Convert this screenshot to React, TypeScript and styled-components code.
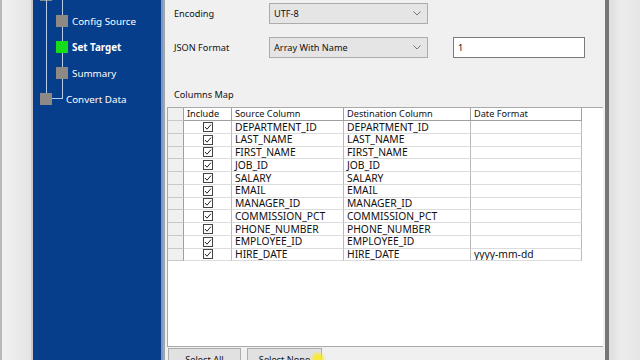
import styled, { createGlobalStyle } from "styled-components";

const GlobalStyle = createGlobalStyle`
  html, body {
    margin: 0;
    padding: 0;
    width: 640px;
    height: 360px;
    overflow: hidden;
    background: #e8e8e8;
  }
  * {
    box-sizing: border-box;
  }
`;

const font = `"Noto Sans", "Liberation Sans", sans-serif`;

const Screen = styled.div`
  display: flex;
  width: 640px;
  height: 360px;
  overflow: hidden;
  font-family: ${font};
  font-size: 9.2px;
  color: #111;
  position: relative;
`;

const DesktopLeft = styled.div`
  width: 33px;
  flex: none;
  border-left: 2px solid #b8b8b8;
  border-right: 2px solid #c9c9c9;
  background: linear-gradient(to right, #f1f1f1, #e4e4e4);
`;

const Sidebar = styled.div`
  position: relative;
  width: 128px;
  flex: none;
  background: #063e8b;
  padding-top: 8px;
`;

const TreeLines = styled.svg`
  position: absolute;
  left: 0;
  top: 0;
`;

const TreeItem = styled.div<{ $child?: boolean }>`
  position: relative;
  display: flex;
  align-items: center;
  height: 26px;
  padding-left: ${(p) => (p.$child ? 23 : 7)}px;
  gap: ${(p) => (p.$child ? 4 : 14)}px;
  color: #fff;
  font-size: 9.8px;
`;

const StepBox = styled.span<{ $active?: boolean }>`
  width: 12px;
  height: 12px;
  flex: none;
  background: ${(p) => (p.$active ? "#16dd1a" : "#8d8984")};
`;

const StepLabel = styled.span<{ $active?: boolean }>`
  font-weight: ${(p) => (p.$active ? 700 : 400)};
  white-space: nowrap;
`;

const Divider = styled.div`
  width: 4px;
  flex: none;
  border-left: 2px solid #7d98c2;
  background: #a4a4a4;
`;

const Panel = styled.div`
  width: 440px;
  flex: none;
  background: #f0f0f0;
  display: flex;
  flex-direction: column;
  padding-left: 2px;
  & > * {
    flex: none;
  }
`;

const FormRow = styled.div<{ $top: number }>`
  display: flex;
  align-items: center;
  height: 21px;
  margin-top: ${(p) => p.$top}px;
`;

const FieldLabel = styled.div`
  width: 102px;
  padding-left: 7px;
  flex: none;
`;

const Select = styled.div`
  width: 159px;
  height: 100%;
  display: flex;
  align-items: center;
  justify-content: space-between;
  padding: 0 6px 0 4px;
  background: #e5e5e5;
  border: 1px solid #acacac;
`;

const TextInput = styled.div`
  width: 132px;
  height: 100%;
  margin-left: 25px;
  display: flex;
  align-items: center;
  padding-left: 4px;
  background: #fff;
  border: 1px solid #7a7a7a;
`;

const SectionLabel = styled.div`
  margin-top: 30px;
  height: 14px;
  line-height: 14px;
  padding-left: 7px;
`;

const Grid = styled.div`
  margin-top: 5px;
  width: 436px;
  height: 240px;
  background: #fff;
  border: 1px solid #a9a9a9;
  border-right: none;
`;

const GridRow = styled.div<{ $header?: boolean }>`
  display: flex;
  height: ${(p) => (p.$header ? 13 : 12.75)}px;
`;

const Cell = styled.div<{ $w: number; $center?: boolean; $header?: boolean }>`
  width: ${(p) => p.$w}px;
  flex: none;
  display: flex;
  align-items: center;
  justify-content: ${(p) => (p.$center ? "center" : "flex-start")};
  padding-left: ${(p) => (p.$center ? 0 : 3)}px;
  border-right: 1px solid ${(p) => (p.$header ? "#a0a0a0" : "#b9b9b9")};
  border-bottom: 1px solid ${(p) => (p.$header ? "#a0a0a0" : "#dcdcdc")};
  font-size: ${(p) => (p.$header ? 9.2 : 10.3)}px;
  white-space: nowrap;
  overflow: hidden;
  line-height: 1;
`;

const RowHead = styled.div`
  width: 16px;
  flex: none;
  background: #f0f0f0;
  border-right: 1px solid #a0a0a0;
  border-bottom: 1px solid #c8c8c8;
`;

const ButtonBar = styled.div`
  display: flex;
  gap: 6px;
  margin-top: 1px;
  padding-left: 1px;
`;

const Button = styled.div<{ $w: number }>`
  width: ${(p) => p.$w}px;
  height: 23px;
  display: flex;
  justify-content: center;
  padding-top: 4px;
  background: #e1e1e1;
  border: 1px solid #adadad;
`;

const DesktopRight = styled.div`
  flex: 1;
  border-left: 4px solid #767676;
  background: linear-gradient(to right, #dedede, #ececec 40%, #e6e6e6);
`;

const CursorGlow = styled.div`
  position: absolute;
  left: 310px;
  top: 351px;
  width: 16px;
  height: 16px;
  border-radius: 50%;
  background: radial-gradient(circle, rgba(250, 235, 30, 0.85) 30%, rgba(250, 235, 30, 0) 72%);
  pointer-events: none;
`;

const Chevron = () => (
  <svg width="8" height="5" viewBox="0 0 8 5">
    <path d="M0.5 0.5 L4 4 L7.5 0.5" fill="none" stroke="#777" strokeWidth="1" />
  </svg>
);

const Check = () => (
  <svg width="10" height="10" viewBox="0 0 10 10">
    <rect x="0.5" y="0.5" width="9" height="9" fill="#fff" stroke="#444" />
    <path d="M2 5 L4 7.2 L8 2.6" fill="none" stroke="#222" strokeWidth="1" />
  </svg>
);

const cols = [
  { key: "include", title: "Include", w: 48 },
  { key: "source", title: "Source Column", w: 112 },
  { key: "dest", title: "Destination Column", w: 127 },
  { key: "date", title: "Date Format", w: 111 },
];

const rows = [
  { name: "DEPARTMENT_ID" },
  { name: "LAST_NAME" },
  { name: "FIRST_NAME" },
  { name: "JOB_ID" },
  { name: "SALARY" },
  { name: "EMAIL" },
  { name: "MANAGER_ID" },
  { name: "COMMISSION_PCT" },
  { name: "PHONE_NUMBER" },
  { name: "EMPLOYEE_ID" },
  { name: "HIRE_DATE", format: "yyyy-mm-dd" },
];

export default function App() {
  return (
    <Screen>
      <GlobalStyle />
      <DesktopLeft />
      <Sidebar>
        <TreeLines width="128" height="110">
          <rect x="7" y="-11" width="12" height="12" fill="#8d8984" />
          <line x1="13.5" y1="0" x2="13.5" y2="93" stroke="#b9cbe8" />
          <line x1="29.5" y1="0" x2="29.5" y2="98.5" stroke="#b9cbe8" />
          <line x1="19" y1="98.5" x2="30" y2="98.5" stroke="#b9cbe8" />
        </TreeLines>
        <TreeItem $child>
          <StepBox />
          <StepLabel>Config Source</StepLabel>
        </TreeItem>
        <TreeItem $child>
          <StepBox $active />
          <StepLabel $active>Set Target</StepLabel>
        </TreeItem>
        <TreeItem $child>
          <StepBox />
          <StepLabel>Summary</StepLabel>
        </TreeItem>
        <TreeItem>
          <StepBox />
          <StepLabel>Convert Data</StepLabel>
        </TreeItem>
      </Sidebar>
      <Divider />
      <Panel>
        <FormRow $top={3}>
          <FieldLabel>Encoding</FieldLabel>
          <Select>
            <span>UTF-8</span>
            <Chevron />
          </Select>
        </FormRow>
        <FormRow $top={13}>
          <FieldLabel>JSON Format</FieldLabel>
          <Select>
            <span>Array With Name</span>
            <Chevron />
          </Select>
          <TextInput>1</TextInput>
        </FormRow>
        <SectionLabel>Columns Map</SectionLabel>
        <Grid>
          <GridRow $header>
            <RowHead />
            {cols.map((c) => (
              <Cell key={c.key} $w={c.w} $header>
                {c.title}
              </Cell>
            ))}
          </GridRow>
          {rows.map((r) => (
            <GridRow key={r.name}>
              <RowHead />
              <Cell $w={48} $center>
                <Check />
              </Cell>
              <Cell $w={112}>{r.name}</Cell>
              <Cell $w={127}>{r.name}</Cell>
              <Cell $w={111}>{r.format ?? ""}</Cell>
            </GridRow>
          ))}
        </Grid>
        <ButtonBar>
          <Button $w={73}>Select All</Button>
          <Button $w={75}>Select None</Button>
        </ButtonBar>
      </Panel>
      <DesktopRight />
      <CursorGlow />
    </Screen>
  );
}
